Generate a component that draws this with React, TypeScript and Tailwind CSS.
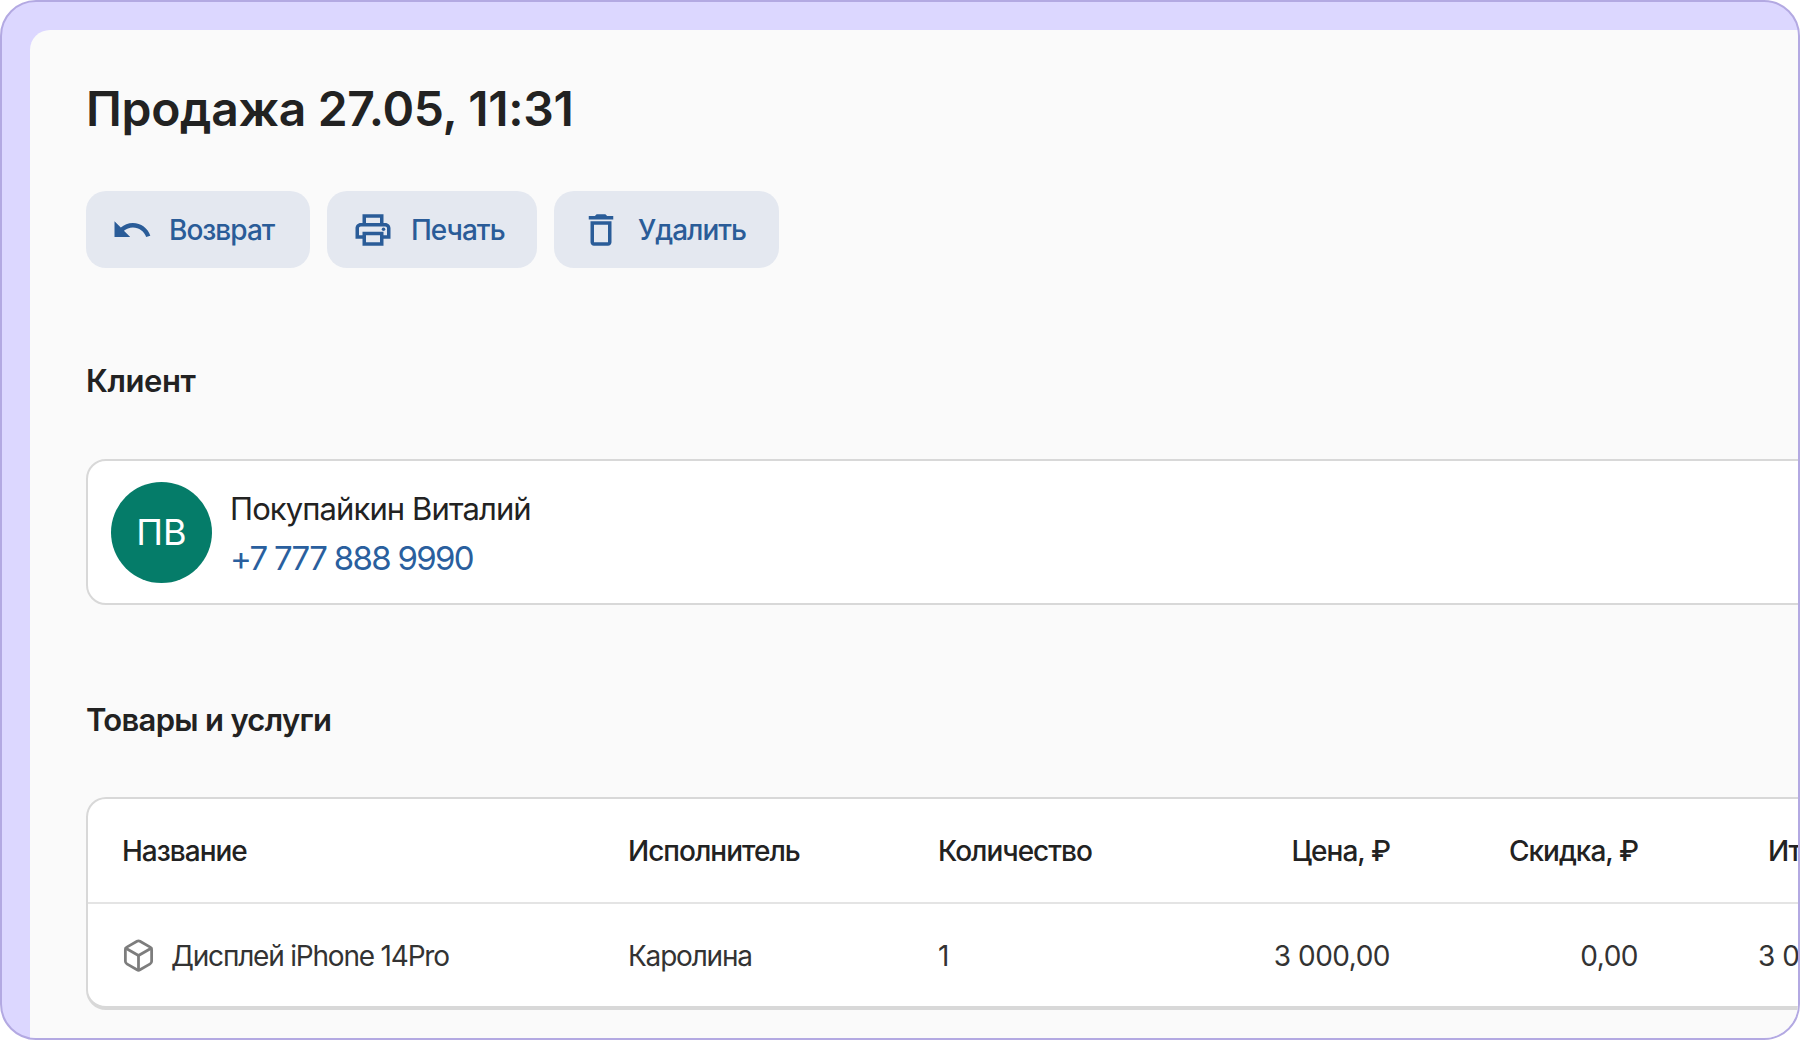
import { Box } from 'lucide-react';
import { MdUndo, MdOutlinePrint, MdOutlineDelete } from 'react-icons/md';

const actions = [
  { label: 'Возврат', icon: MdUndo, width: 'w-[224px]', gap: 'gap-[16px]', pad: 'pl-[25px]' },
  { label: 'Печать', icon: MdOutlinePrint, width: 'w-[210px]', gap: 'gap-[17px]', pad: 'pl-[25px]' },
  { label: 'Удалить', icon: MdOutlineDelete, width: 'w-[225px]', gap: 'gap-[16px]', pad: 'pl-[26px]' },
];

export default function App() {
  return (
    <div className="w-[1800px] h-[1040px] overflow-hidden bg-white font-['Inter',sans-serif]">
      <div className="w-full h-full overflow-hidden rounded-[36px] border-2 border-[#b3a9e2] bg-[#dcd7ff] pl-[28px] pt-[28px]">
        <div className="h-full overflow-hidden rounded-tl-[20px] bg-[#fafafa] pl-[56px] pt-[46px] text-[#222222]">
          <h1 className="text-[48px] leading-[66px] font-semibold tracking-[-0.3px]">Продажа 27.05, 11:31</h1>

          {/* Actions */}
          <div className="flex gap-[17px] mt-[49px]">
            {actions.map(a => {
              const Icon = a.icon;
              return (
                <button key={a.label} className={`flex items-center h-[77px] rounded-[20px] bg-[#e4e8f0] text-[#2a5c98] ${a.width} ${a.gap} ${a.pad}`}>
                  <Icon size={42} />
                  <span className="text-[28px] font-medium tracking-[-1px]">{a.label}</span>
                </button>
              );
            })}
          </div>

          <h2 className="mt-[95px] text-[31px] leading-[36px] font-semibold tracking-[-0.4px]">Клиент</h2>

          {/* Client card */}
          <div className="mt-[60px] w-[1800px] h-[146px] rounded-[20px] border-2 border-[#d8d8d8] bg-white flex items-center pl-[23px] gap-[19px]">
            <div className="w-[101px] h-[101px] rounded-full bg-[#057c69] text-white flex items-center justify-center text-[36px]">ПВ</div>
            <div className="-ml-[1px] pt-[2px]">
              <div className="text-[31px] leading-[42px] tracking-[-0.9px]">Покупайкин Виталий</div>
              <div className="mt-[7px] text-[33px] leading-[42px] tracking-[-1.7px] text-[#2a5f9e]">+7 777 888 9990</div>
            </div>
          </div>

          <h2 className="mt-[97px] text-[31px] leading-[36px] font-semibold tracking-[-0.7px]">Товары и услуги</h2>

          {/* Items table */}
          <div className="mt-[59px] w-[1800px] rounded-[20px] border-2 border-b-[4px] border-[#d8d8d8] bg-white text-[28px]">
            <div className="grid grid-cols-[506px_310px_264px_188px_248px_1fr] items-center h-[105px] pl-[34px] border-b-2 border-[#e4e4e4] font-medium tracking-[-1px]">
              <div>Название</div>
              <div>Исполнитель</div>
              <div>Количество</div>
              <div className="text-right">Цена, ₽</div>
              <div className="text-right">Скидка, ₽</div>
              <div className="pl-[130px]">Итого, ₽</div>
            </div>
            <div className="grid grid-cols-[506px_310px_264px_188px_248px_1fr] items-center h-[102px] pl-[34px] pt-[1px] text-[#333333] tracking-[-1.2px]">
              <div className="flex items-center gap-[15px]">
                <Box size={35} strokeWidth={1.9} className="text-[#7d7d7d] -ml-[1px]" />
                <span>Дисплей iPhone 14Pro</span>
              </div>
              <div>Каролина</div>
              <div>1</div>
              <div className="text-right tracking-[-0.5px]">3 000,00</div>
              <div className="text-right tracking-[-0.5px]">0,00</div>
              <div className="pl-[120px] tracking-[-0.5px]">3 000,00</div>
            </div>
          </div>
        </div>
      </div>
    </div>
  );
}
